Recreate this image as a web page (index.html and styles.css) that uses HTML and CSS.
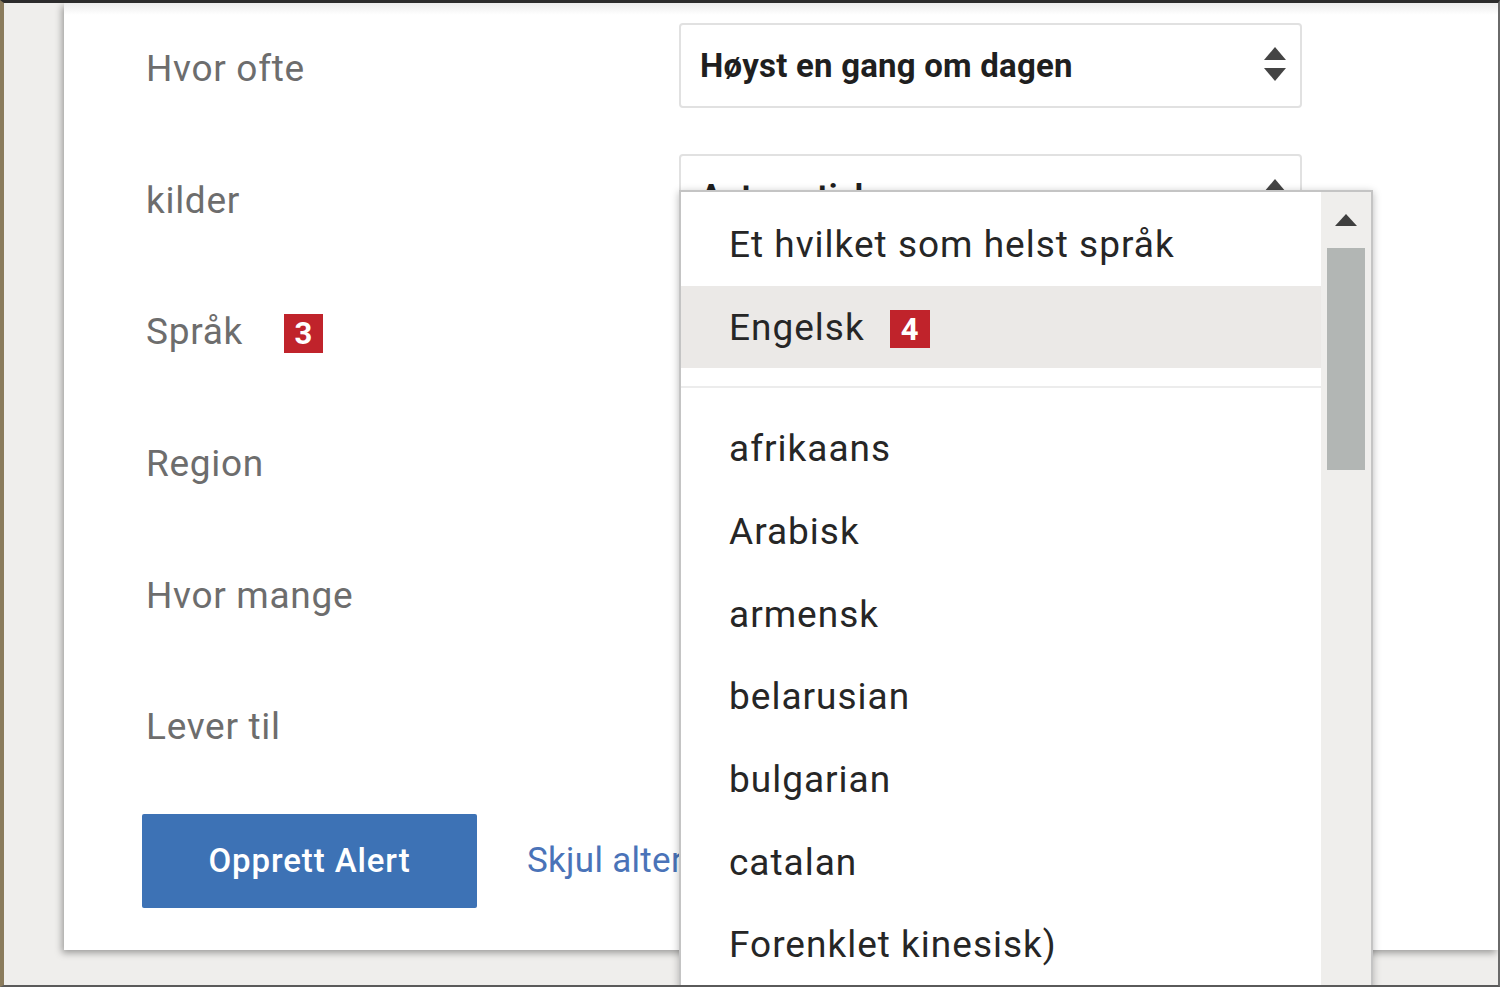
FILE: index.html
```html
<!DOCTYPE html>
<html lang="no">
<head>
<meta charset="utf-8">
<title>Opprett Alert</title>
<link rel="stylesheet" href="styles.css">
</head>
<body>
<div class="frame">
  <div class="card">
    <div class="form">
      <div class="row">
        <div class="label">Hvor ofte</div>
        <div class="select">
          <span class="select-text">Høyst en gang om dagen</span>
          <svg class="spinner" viewBox="0 0 22 34" width="22" height="34"><polygon points="11,0 22,13 0,13"/><polygon points="0,21 22,21 11,34"/></svg>
        </div>
      </div>
      <div class="row">
        <div class="label">kilder</div>
        <div class="select">
          <span class="select-text">Automatisk</span>
          <svg class="spinner" viewBox="0 0 22 34" width="22" height="34"><polygon points="11,0 22,13 0,13"/><polygon points="0,21 22,21 11,34"/></svg>
        </div>
      </div>
      <div class="row">
        <div class="label">Språk <span class="badge badge-3">3</span></div>
      </div>
      <div class="row">
        <div class="label">Region</div>
      </div>
      <div class="row">
        <div class="label">Hvor mange</div>
      </div>
      <div class="row">
        <div class="label">Lever til</div>
      </div>
      <div class="actions">
        <button class="primary" type="button">Opprett Alert</button>
        <a class="link" href="#">Skjul alternativer</a>
      </div>
    </div>

    <div class="dropdown">
      <ul class="options">
        <li class="option">Et hvilket som helst språk</li>
        <li class="option selected">Engelsk <span class="badge badge-4">4</span></li>
        <li class="divider"></li>
        <li class="option">afrikaans</li>
        <li class="option">Arabisk</li>
        <li class="option">armensk</li>
        <li class="option">belarusian</li>
        <li class="option">bulgarian</li>
        <li class="option">catalan</li>
        <li class="option">Forenklet kinesisk)</li>
      </ul>
      <div class="scrollbar">
        <svg class="scroll-up" viewBox="0 0 22 12" width="22" height="12"><polygon points="11,0 22,12 0,12"/></svg>
        <div class="thumb"></div>
      </div>
    </div>
  </div>
</div>
</body>
</html>
```

FILE: styles.css
```css
* {
  box-sizing: border-box;
}

html, body {
  margin: 0;
  padding: 0;
}

body {
  width: 1500px;
  height: 987px;
  overflow: hidden;
  font-family: Roboto, "Liberation Sans", Arial, sans-serif;
  background: #efeeec;
}

.frame {
  position: relative;
  width: 1500px;
  height: 987px;
  overflow: hidden;
  background: #efeeec;
  border-top: 3px solid #2c2c2c;
  border-left: 4px solid #8a7b5c;
  border-right: 2px solid #6a6a6a;
  border-bottom: 2px solid #5a5a5a;
}

.card {
  position: relative;
  margin-left: 60px;
  height: 947px;
  background: #ffffff;
  box-shadow: -2px 3px 7px rgba(0, 0, 0, 0.35);
  padding-left: 82px;
}

.card::before {
  content: "";
  position: absolute;
  left: 0;
  right: 0;
  top: 0;
  height: 12px;
  background: linear-gradient(#ececec, rgba(255, 255, 255, 0));
}

.form {
  position: relative;
}

.row {
  height: 131.6px;
  display: flex;
  align-items: center;
}

.label {
  width: 533px;
  flex: none;
  font-size: 37px;
  color: #6d6d6d;
  display: flex;
  align-items: center;
  letter-spacing: 0.7px;
}

.select {
  width: 623px;
  height: 85px;
  margin-bottom: 7px;
  border: 2px solid #e1e1e1;
  border-radius: 4px;
  display: flex;
  align-items: center;
  justify-content: space-between;
  padding: 0 14px 0 19px;
  background: #fff;
}

.select-text {
  font-size: 33px;
  font-weight: 700;
  color: #1f1f1f;
  letter-spacing: 0.2px;
}

.spinner {
  fill: #444;
  display: block;
  margin-top: -2px;
}

.badge {
  display: inline-flex;
  align-items: center;
  justify-content: center;
  background: #c0232b;
  color: #ffffff;
  font-weight: 700;
  font-size: 31px;
  line-height: 1;
  letter-spacing: 0;
}

.badge-3 {
  width: 39px;
  height: 39px;
  margin-left: 41px;
  margin-top: 3px;
}

.badge-4 {
  width: 40px;
  height: 38px;
  margin-left: 25px;
  margin-top: 4px;
}

.actions {
  display: flex;
  align-items: center;
  margin-top: 21px;
  margin-left: -4px;
}

.primary {
  width: 335px;
  height: 94px;
  border: none;
  border-radius: 2px;
  background: #3d72b5;
  color: #ffffff;
  font-family: Roboto, "Liberation Sans", Arial, sans-serif;
  font-size: 33px;
  font-weight: 500;
  letter-spacing: 0.9px;
  padding: 0;
}

.link {
  margin-left: 50px;
  font-size: 35px;
  color: #4a73b8;
  text-decoration: none;
  white-space: nowrap;
  letter-spacing: 0.3px;
}

.dropdown {
  position: absolute;
  left: 615px;
  top: 187px;
  width: 694px;
  height: 800px;
  background: #ffffff;
  border: 2px solid #c4c4c4;
  border-bottom: none;
  box-shadow: 0 2px 8px rgba(0, 0, 0, 0.28);
  display: flex;
  z-index: 2;
}

.options {
  list-style: none;
  margin: 0;
  padding: 11px 0 0 0;
  flex: 1;
  overflow: hidden;
}

.option {
  height: 82.7px;
  display: flex;
  align-items: center;
  padding-left: 48px;
  font-size: 37px;
  color: #262626;
  letter-spacing: 1px;
  white-space: nowrap;
}

.option.selected {
  background: #ebe9e7;
}

.divider {
  height: 2px;
  margin: 18px 0 19px;
  background: #ececec;
}

.scrollbar {
  width: 50px;
  flex: none;
  background: #efeeec;
  display: flex;
  flex-direction: column;
  align-items: center;
  padding-top: 22px;
}

.scroll-up {
  fill: #3f3f3f;
  display: block;
}

.thumb {
  margin-top: 22px;
  width: 38px;
  height: 222px;
  background: #b2b6b4;
}
```
